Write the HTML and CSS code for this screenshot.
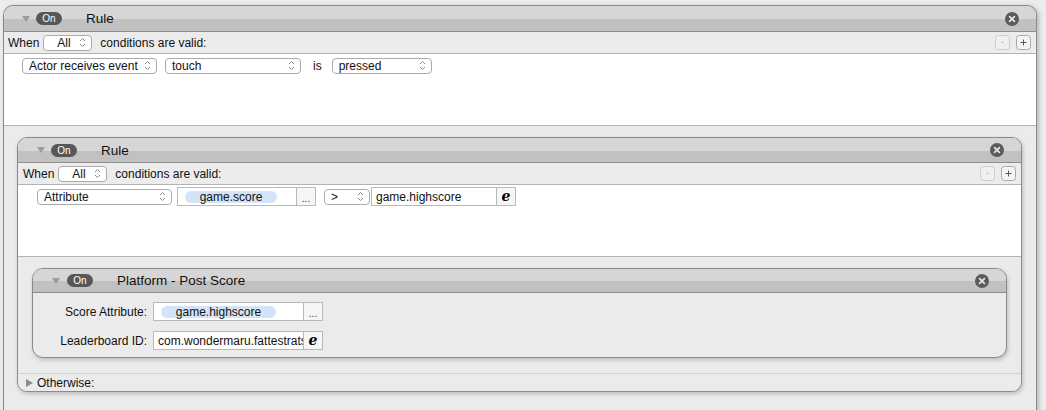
FILE: index.html
```html
<!DOCTYPE html>
<html>
<head>
<meta charset="utf-8">
<link rel="stylesheet" href="styles.css">
</head>
<body>
<div class="rule outer">
  <div class="head h25">
    <span class="tri-down"></span>
    <span class="pill">On</span>
    <span class="title">Rule</span>
    <svg class="close" width="14" height="14" viewBox="0 0 14 14"><circle cx="7" cy="7" r="7" fill="#5b5b5b"/><path d="M4.6 4.6 L9.4 9.4 M9.4 4.6 L4.6 9.4" stroke="#e6e6e6" stroke-width="1.7" stroke-linecap="round"/></svg>
  </div>
  <div class="cond">
    <span class="lbl">When</span>
    <span class="popup w49 center"><span class="ptxt">All</span><svg class="chev" width="7" height="11" viewBox="0 0 7 11"><path d="M1 4 L3.5 1.5 L6 4 M1 7 L3.5 9.5 L6 7" fill="none" stroke="#8a8a8a" stroke-width="1"/></svg></span>
    <span class="lbl gap8">conditions are valid:</span>
    <span class="pm">
      <svg class="sq dis" width="15" height="15" viewBox="0 0 15 15"><rect x="0.5" y="0.5" width="14" height="14" rx="3" fill="#f0f0f0" stroke="#cdcdcd"/><path d="M6.5 7.5 H8.5" stroke="#b5b5b5"/></svg>
      <svg class="sq" width="15" height="15" viewBox="0 0 15 15"><rect x="0.5" y="0.5" width="14" height="14" rx="3" fill="#f4f4f4" stroke="#a9a9a9"/><path d="M4.5 7.5 H10.5 M7.5 4.5 V10.5" stroke="#555" stroke-width="1"/></svg>
    </span>
  </div>
  <div class="white">
    <div class="row r-outer">
      <span class="popup w135"><span class="ptxt">Actor receives event</span><svg class="chev" width="7" height="11" viewBox="0 0 7 11"><path d="M1 4 L3.5 1.5 L6 4 M1 7 L3.5 9.5 L6 7" fill="none" stroke="#8a8a8a" stroke-width="1"/></svg></span>
      <span class="popup w136 ml8"><span class="ptxt">touch</span><svg class="chev" width="7" height="11" viewBox="0 0 7 11"><path d="M1 4 L3.5 1.5 L6 4 M1 7 L3.5 9.5 L6 7" fill="none" stroke="#8a8a8a" stroke-width="1"/></svg></span>
      <span class="lbl is">is</span>
      <span class="popup w100"><span class="ptxt">pressed</span><svg class="chev" width="7" height="11" viewBox="0 0 7 11"><path d="M1 4 L3.5 1.5 L6 4 M1 7 L3.5 9.5 L6 7" fill="none" stroke="#8a8a8a" stroke-width="1"/></svg></span>
    </div>
  </div>
  <div class="gray outer-gray">
    <div class="rule inner">
      <div class="head h24">
        <span class="tri-down"></span>
        <span class="pill">On</span>
        <span class="title">Rule</span>
        <svg class="close" width="14" height="14" viewBox="0 0 14 14"><circle cx="7" cy="7" r="7" fill="#5b5b5b"/><path d="M4.6 4.6 L9.4 9.4 M9.4 4.6 L4.6 9.4" stroke="#e6e6e6" stroke-width="1.7" stroke-linecap="round"/></svg>
      </div>
      <div class="cond">
        <span class="lbl">When</span>
        <span class="popup w49 center"><span class="ptxt">All</span><svg class="chev" width="7" height="11" viewBox="0 0 7 11"><path d="M1 4 L3.5 1.5 L6 4 M1 7 L3.5 9.5 L6 7" fill="none" stroke="#8a8a8a" stroke-width="1"/></svg></span>
        <span class="lbl gap8">conditions are valid:</span>
        <span class="pm">
          <svg class="sq dis" width="15" height="15" viewBox="0 0 15 15"><rect x="0.5" y="0.5" width="14" height="14" rx="3" fill="#f0f0f0" stroke="#cdcdcd"/><path d="M6.5 7.5 H8.5" stroke="#b5b5b5"/></svg>
          <svg class="sq" width="15" height="15" viewBox="0 0 15 15"><rect x="0.5" y="0.5" width="14" height="14" rx="3" fill="#f4f4f4" stroke="#a9a9a9"/><path d="M4.5 7.5 H10.5 M7.5 4.5 V10.5" stroke="#555" stroke-width="1"/></svg>
        </span>
      </div>
      <div class="white">
        <div class="row r-inner">
          <span class="popup w135"><span class="ptxt">Attribute</span><svg class="chev" width="7" height="11" viewBox="0 0 7 11"><path d="M1 4 L3.5 1.5 L6 4 M1 7 L3.5 9.5 L6 7" fill="none" stroke="#8a8a8a" stroke-width="1"/></svg></span>
          <span class="field fw119 ml5"><span class="tag tw92">game.score</span></span><span class="btn dots">...</span>
          <span class="popup w46 ml8"><span class="ptxt">&gt;</span><svg class="chev" width="7" height="11" viewBox="0 0 7 11"><path d="M1 4 L3.5 1.5 L6 4 M1 7 L3.5 9.5 L6 7" fill="none" stroke="#8a8a8a" stroke-width="1"/></svg></span>
          <span class="field fw125 ml1"><span class="ftxt">game.highscore</span></span><span class="btn ebtn">e</span>
        </div>
      </div>
      <div class="gray inner-gray">
        <div class="rule action">
          <div class="head h23">
            <span class="tri-down"></span>
            <span class="pill">On</span>
            <span class="title">Platform - Post Score</span>
            <svg class="close" width="14" height="14" viewBox="0 0 14 14"><circle cx="7" cy="7" r="7" fill="#5b5b5b"/><path d="M4.6 4.6 L9.4 9.4 M9.4 4.6 L4.6 9.4" stroke="#e6e6e6" stroke-width="1.7" stroke-linecap="round"/></svg>
          </div>
          <div class="abody">
            <span class="alabel">Score Attribute:</span>
            <span class="fgroup"><span class="field fw150"><span class="tag tw115">game.highscore</span></span><span class="btn dots">...</span></span>
            <span class="alabel">Leaderboard ID:</span>
            <span class="fgroup"><span class="field fw150"><span class="ftxt">com.wondermaru.fattestrats</span></span><span class="btn ebtn">e</span></span>
          </div>
        </div>
      </div>
      <div class="otherwise">
        <span class="tri-right"></span>
        <span class="lbl">Otherwise:</span>
      </div>
    </div>
  </div>
</div>
</body>
</html>
```

FILE: styles.css
```css
* { box-sizing: border-box; }
html, body { margin: 0; padding: 0; }
body {
  width: 1046px;
  height: 410px;
  overflow: hidden;
  background: #ececec;
  font-family: "Liberation Sans", Arial, sans-serif;
  font-size: 12px;
  color: #111;
}

.rule {
  border: 1px solid #8a8a8a;
  background: #ebebeb;
  overflow: hidden;
}
.outer {
  margin: 5px 0 0 3px;
  width: 1034px;
  border-bottom: none;
  border-radius: 10px 10px 0 0;
  box-shadow: 2px 1px 4px rgba(0,0,0,0.22);
}
.inner {
  border-radius: 10px;
  box-shadow: 1px 2px 4px rgba(0,0,0,0.2);
}
.action {
  border-radius: 11px;
  box-shadow: 1px 2px 4px rgba(0,0,0,0.2);
}

.head {
  display: flex;
  align-items: center;
  padding: 0 17px 0 18px;
  border-bottom: 1px solid #8e8e8e;
}
.h25 { height: 26px; background: linear-gradient(#d6d6d6 0, #d6d6d6 13px, #c1c1c1 13px); }
.h24 { height: 25px; background: linear-gradient(#d6d6d6 0, #d6d6d6 13px, #c1c1c1 13px); }
.h23 { height: 24px; background: linear-gradient(#d6d6d6 0, #d6d6d6 12px, #c1c1c1 12px); }
.action .head { padding-left: 19px; }
.inner .head { padding-left: 19px; }

.tri-down {
  width: 0; height: 0;
  border-left: 4px solid transparent;
  border-right: 4px solid transparent;
  border-top: 6px solid #9b9b9b;
}
.tri-right {
  width: 0; height: 0;
  border-top: 4px solid transparent;
  border-bottom: 4px solid transparent;
  border-left: 7px solid #8a8a8a;
}
.pill {
  margin-left: 6px;
  width: 26px;
  height: 13px;
  border-radius: 7px;
  background: #575757;
  color: #fff;
  font-size: 10px;
  line-height: 13px;
  text-align: center;
}
.action .pill { margin-left: 7px; }
.title {
  margin-left: 24px;
  font-size: 13.5px;
  color: #111;
}
.close { margin-left: auto; display: block; }

.cond {
  height: 22px;
  display: flex;
  align-items: center;
  padding: 0 5px 0 4px;
  border-bottom: 1px solid #b3b3b3;
  background: #ececec;
}
.inner .cond { padding-left: 5px; }
.lbl { white-space: nowrap; }
.cond .popup { margin-left: 4px; }
.gap8 { margin-left: 8px; }
.pm { margin-left: auto; display: flex; gap: 6px; }
.sq { display: block; }

.white {
  height: 72px;
  background: #fff;
  border-bottom: 1px solid #b3b3b3;
}
.row { display: flex; align-items: center; }
.r-outer { padding: 3px 0 0 18px; height: 20px; }
.r-inner { padding: 2px 0 0 19px; height: 21px; }

.popup {
  height: 16px;
  display: inline-flex;
  align-items: center;
  justify-content: space-between;
  border: 1px solid #ababab;
  border-radius: 4px;
  background: #fff;
  padding: 0 5px 0 6px;
  white-space: nowrap;
}
.popup.center .ptxt { margin-left: 7px; }
.chev { display: block; }
.w49 { width: 49px; }
.w135 { width: 135px; }
.w136 { width: 136px; }
.w100 { width: 100px; }
.w46 { width: 46px; }
.ml8 { margin-left: 8px; }
.ml5 { margin-left: 5px; }
.ml1 { margin-left: 1px; }
.is { margin-left: 12px; margin-right: 10px; }

.field {
  height: 19px;
  display: inline-flex;
  align-items: center;
  border: 1px solid #b9b9b9;
  background: #fff;
  overflow: hidden;
  white-space: nowrap;
}
.fw119 { width: 120px; }
.fw125 { width: 126px; }
.fw150 { width: 151px; }
.tag {
  margin-left: 7px;
  height: 12px;
  line-height: 12px;
  border-radius: 6px;
  background: #d3e4f8;
  text-align: center;
  color: #111;
}
.tw92 { width: 92px; }
.tw115 { width: 115px; }
.ftxt { padding-left: 4px; }
.btn {
  height: 19px;
  width: 19px;
  border: 1px solid #b9b9b9;
  border-left: none;
  background: #f6f6f6;
  display: inline-flex;
  align-items: center;
  justify-content: center;
}
.dots { font-size: 10px; padding-top: 3px; color: #333; }
.ebtn {
  font-family: "DejaVu Serif", serif;
  font-weight: bold;
  font-style: italic;
  font-size: 14px;
  color: #000;
  padding-bottom: 2px;
}

.gray { background: #ebebeb; }
.outer-gray { padding: 11px 14px 19px 13px; }
.inner-gray { padding: 11px 14px 15px 14px; }

.abody {
  height: 64px;
  display: grid;
  grid-template-columns: 114px 170px;
  grid-template-rows: 19px 19px;
  column-gap: 6px;
  row-gap: 10px;
  padding-top: 9px;
  align-items: center;
}
.alabel { text-align: right; white-space: nowrap; }
.fgroup { display: flex; }

.otherwise {
  height: 18px;
  border-top: 1px solid #d2d2d2;
  display: flex;
  align-items: center;
  gap: 4px;
  padding-left: 8px;
  background: #ebebeb;
}
```
